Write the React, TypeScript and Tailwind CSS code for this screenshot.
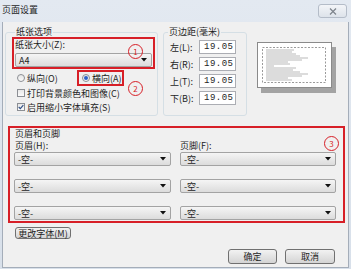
import React from "react";

const RED = "border-[#d71f27]";

function Select({ value, width }: { value: string; width: string }) {
  return (
    <div
      className={`${width} h-[14px] flex items-center justify-between rounded-[2px] border border-[#a3a3a3] bg-gradient-to-b from-[#f5f5f5] to-[#dcdcdc] pl-[3px] pr-[4px] text-[9px] leading-none`}
    >
      <span>{value}</span>
      <svg width="6" height="4" viewBox="0 0 6 4">
        <path d="M0 0 L6 0 L3 3.5 Z" fill="#111" />
      </svg>
    </div>
  );
}

function Radio({ checked }: { checked?: boolean }) {
  return (
    <span className="w-[8px] h-[8px] rounded-full border border-[#8c8f94] bg-gradient-to-b from-[#e6e6e6] to-[#fafafa] flex items-center justify-center flex-shrink-0">
      {checked && <span className="w-[4px] h-[4px] rounded-full bg-[#2c62c9]" />}
    </span>
  );
}

function Checkbox({ checked }: { checked?: boolean }) {
  return (
    <span className="w-[8px] h-[8px] border border-[#8c8f94] bg-gradient-to-b from-[#e8e8e8] to-[#fbfbfb] flex items-center justify-center flex-shrink-0">
      {checked && (
        <svg width="7" height="6" viewBox="0 0 7 6">
          <path d="M0.8 3 L2.7 5 L6.2 0.8" stroke="#2f4f86" strokeWidth="1.3" fill="none" />
        </svg>
      )}
    </span>
  );
}

function Circle({ n, pos }: { n: number; pos: string }) {
  return (
    <div
      className={`absolute ${pos} w-[15px] h-[15px] rounded-full border-[1.5px] ${RED} flex items-center justify-center text-[8px] leading-none text-[#d71f27]`}
    >
      {n}
    </div>
  );
}

function MarginRow({ label }: { label: string }) {
  return (
    <div className="flex items-center h-[14px] pl-[6px]">
      <span className="w-[29px] text-[9px] leading-none">{label}</span>
      <div className="w-[37px] h-[14px] border border-[#abadb3] bg-white flex items-center pl-[4px] text-[9px] leading-none tracking-[0.5px] font-[family-name:Liberation_Mono,monospace]">
        19.05
      </div>
    </div>
  );
}

function Preview() {
  const lines = [28, 26, 30, 34, 42, 36, 22, 24, 8, 30, 27, 34, 42, 36, 22, 26];
  return (
    <div className="ml-[10px] mt-[16px] w-[75px] h-[46px] bg-white border border-[#8a8a8a] shadow-[4px_5px_0_#a3a3a3]">
      <svg width="73" height="44" viewBox="0 0 73 44">
        <rect x="4.5" y="4.5" width="63" height="35" fill="none" stroke="#9a9a9a" strokeDasharray="2 1.5" />
        {lines.map((w, i) => (
          <rect key={i} x="8" y={6.5 + i * 2} width={w} height="1" fill="#b9b9b9" />
        ))}
      </svg>
    </div>
  );
}

function WinButton({ label, width }: { label: string; width: string }) {
  return (
    <div
      className={`${width} flex items-center justify-center rounded-[3px] border border-[#707070] bg-gradient-to-b from-[#f2f2f2] to-[#d4d4d4] text-[9px] leading-none`}
    >
      {label}
    </div>
  );
}

export default function App() {
  return (
    <div className="w-[351px] h-[269px] flex flex-col bg-gradient-to-b from-[#e3e9f1] to-[#d8e0ea] text-[#1e1e1e] font-[family-name:Noto_Sans_CJK_SC,Liberation_Sans,sans-serif] overflow-hidden">
      {/* title bar */}
      <div className="h-[22px] flex-shrink-0 flex items-start justify-between">
        <span className="pl-[2px] pt-[5px] text-[9px] leading-none">页面设置</span>
        <div className="mt-[4px] mr-[4px] w-[29px] h-[14px] rounded-[3px] border border-[#b4bcc8] bg-gradient-to-b from-[#f3f5f8] to-[#dde3ea] flex items-center justify-center">
          <svg width="8" height="7" viewBox="0 0 8 7">
            <path d="M1 0.5 L7 6.5 M7 0.5 L1 6.5" stroke="#7d838b" strokeWidth="1.2" />
          </svg>
        </div>
      </div>

      {/* body */}
      <div className="relative flex-1 mx-[2px] mb-[1px] border-x border-b border-[#a4adb9] bg-[#f0f0f0] flex flex-col">
        <div className="flex mt-[4px]">
          {/* 纸张选项 */}
          <fieldset className="ml-[2px] w-[153px] border border-[#d5dfe5] rounded-[3px] pl-[6px] pr-[2px] pb-[1px]">
            <legend className="ml-[3px] px-[1px] text-[9px] leading-[12px]">纸张选项</legend>
            <div className={`-mt-[1px] h-[32px] border-2 ${RED} px-[1px]`}>
              <div className="text-[9px] leading-[12px]">纸张大小(Z):</div>
              <div className="mt-[2px]">
                <Select value="A4" width="w-[137px]" />
              </div>
            </div>
            <div className="flex items-center h-[16px] mt-[1px]">
              <div className="w-[65px] flex items-center gap-[2px] pl-[5px] text-[9px] leading-none">
                <Radio />
                <span>纵向(O)</span>
              </div>
              <div className={`w-[47px] h-[16px] border-2 ${RED} flex items-center gap-[2px] pl-[3px] text-[9px] leading-none`}>
                <Radio checked />
                <span>横向(A)</span>
              </div>
            </div>
            <div className="flex items-center h-[14px] gap-[2px] pl-[5px] text-[9px] leading-none">
              <Checkbox />
              <span>打印背景颜色和图像(C)</span>
            </div>
            <div className="flex items-center h-[14px] gap-[2px] pl-[5px] text-[9px] leading-none">
              <Checkbox checked />
              <span>启用缩小字体填充(S)</span>
            </div>
          </fieldset>

          {/* 页边距 */}
          <fieldset className="ml-[5px] w-[84px] border border-[#d5dfe5] rounded-[3px] pt-[2px] pb-[9px] flex flex-col gap-[3px]">
            <legend className="ml-[4px] px-[1px] text-[9px] leading-[12px]">页边距(毫米)</legend>
            <MarginRow label="左(L):" />
            <MarginRow label="右(R):" />
            <MarginRow label="上(T):" />
            <MarginRow label="下(B):" />
          </fieldset>

          <Preview />
        </div>

        {/* 页眉和页脚 */}
        <div className={`ml-[5px] mt-[10px] w-[337px] border-2 ${RED} pl-[4px] pb-[1px]`}>
          <div className="pl-[1px] text-[9px] leading-[12px]">页眉和页脚</div>
          <div className="grid grid-cols-[157px_156px] gap-x-[9px] gap-y-[13px]">
            <div>
              <div className="pl-[1px] text-[9px] leading-[12px]">页眉(H):</div>
              <Select value="-空-" width="w-[157px]" />
            </div>
            <div>
              <div className="text-[9px] leading-[12px]">页脚(F):</div>
              <Select value="-空-" width="w-[156px]" />
            </div>
            <Select value="-空-" width="w-[157px]" />
            <Select value="-空-" width="w-[156px]" />
            <Select value="-空-" width="w-[157px]" />
            <Select value="-空-" width="w-[156px]" />
          </div>
        </div>

        <div className="ml-[12px] mt-[4px] flex">
          <WinButton label="更改字体(M)" width="w-[56px] h-[12px] text-[8.5px]" />
        </div>

        <div className="mt-[10px] flex justify-end gap-[8px] pr-[13px]">
          <WinButton label="确定" width="w-[49px] h-[15px]" />
          <WinButton label="取消" width="w-[50px] h-[15px]" />
        </div>

        <Circle n={1} pos="left-[125px] top-[22px]" />
        <Circle n={2} pos="left-[125px] top-[59px]" />
        <Circle n={3} pos="left-[321px] top-[114px]" />
      </div>
    </div>
  );
}
